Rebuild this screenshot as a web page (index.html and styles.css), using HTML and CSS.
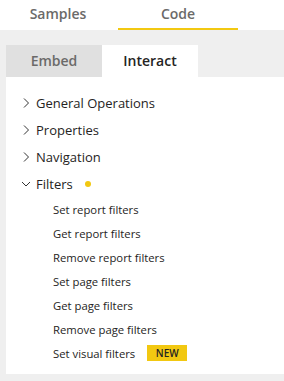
FILE: index.html
```html
<!DOCTYPE html>
<html>
<head>
<meta charset="utf-8">
<link rel="stylesheet" href="styles.css">
</head>
<body>
<div class="topnav">
  <div class="toptab">Samples</div>
  <div class="toptab active">Code</div>
</div>
<div class="main">
  <div class="subtabs">
    <div class="subtab">Embed</div>
    <div class="subtab active">Interact</div>
  </div>
  <div class="panel">
    <div class="group">
      <svg class="chev" width="10" height="10" viewBox="0 0 10 10"><polyline points="3,0.5 7.5,5 3,9.5" fill="none" stroke="#333" stroke-width="1"/></svg>
      <span>General Operations</span>
    </div>
    <div class="group">
      <svg class="chev" width="10" height="10" viewBox="0 0 10 10"><polyline points="3,0.5 7.5,5 3,9.5" fill="none" stroke="#333" stroke-width="1"/></svg>
      <span>Properties</span>
    </div>
    <div class="group">
      <svg class="chev" width="10" height="10" viewBox="0 0 10 10"><polyline points="3,0.5 7.5,5 3,9.5" fill="none" stroke="#333" stroke-width="1"/></svg>
      <span>Navigation</span>
    </div>
    <div class="group">
      <svg class="chev" width="10" height="10" viewBox="0 0 10 10"><polyline points="1,3 5,7 9,3" fill="none" stroke="#333" stroke-width="1"/></svg>
      <span>Filters</span>
      <span class="dot"></span>
    </div>
    <div class="item">Set report filters</div>
    <div class="item">Get report filters</div>
    <div class="item">Remove report filters</div>
    <div class="item">Set page filters</div>
    <div class="item">Get page filters</div>
    <div class="item">Remove page filters</div>
    <div class="item">Set visual filters <span class="badge">NEW</span></div>
  </div>
</div>
</body>
</html>
```
FILE: styles.css
```css
html, body {
  margin: 0;
  padding: 0;
  background: #fff;
  font-family: "Open Sans", "Noto Sans", sans-serif;
  color: #252423;
}
.topnav {
  display: flex;
  height: 30px;
  margin-left: -2px;
  background: #fff;
}
.toptab {
  width: 120px;
  box-sizing: border-box;
  text-align: center;
  font-size: 14px;
  font-weight: 600;
  color: #6b6a69;
  line-height: 27px;
  border-bottom: 2px solid transparent;
}
.toptab.active {
  border-bottom-color: #f2c811;
}
.main {
  background: #efefef;
  padding: 15px 0 7px 6px;
}
.subtabs {
  display: flex;
}
.subtab {
  width: 96px;
  height: 32px;
  line-height: 31px;
  text-align: center;
  font-size: 14px;
  font-weight: 600;
  color: #6b6a69;
  background: #e0e0e0;
}
.subtab.active {
  background: #fff;
  color: #252423;
}
.panel {
  background: #fff;
  padding: 12px 0 9px 0;
}
.group {
  display: flex;
  align-items: center;
  height: 27px;
  font-size: 13px;
  padding-left: 15px;
}
.chev {
  display: block;
  margin-right: 5px;
}
.dot {
  width: 6px;
  height: 6px;
  border-radius: 50%;
  background: #f2c811;
  margin-left: 12px;
}
.item {
  display: flex;
  align-items: center;
  height: 24px;
  font-size: 11.3px;
  padding-left: 47px;
}
.badge {
  display: inline-block;
  margin-left: 12px;
  width: 40px;
  height: 16px;
  line-height: 16px;
  text-align: center;
  background: #f2c811;
  color: #252423;
  font-size: 10px;
  font-weight: 600;
}
```
